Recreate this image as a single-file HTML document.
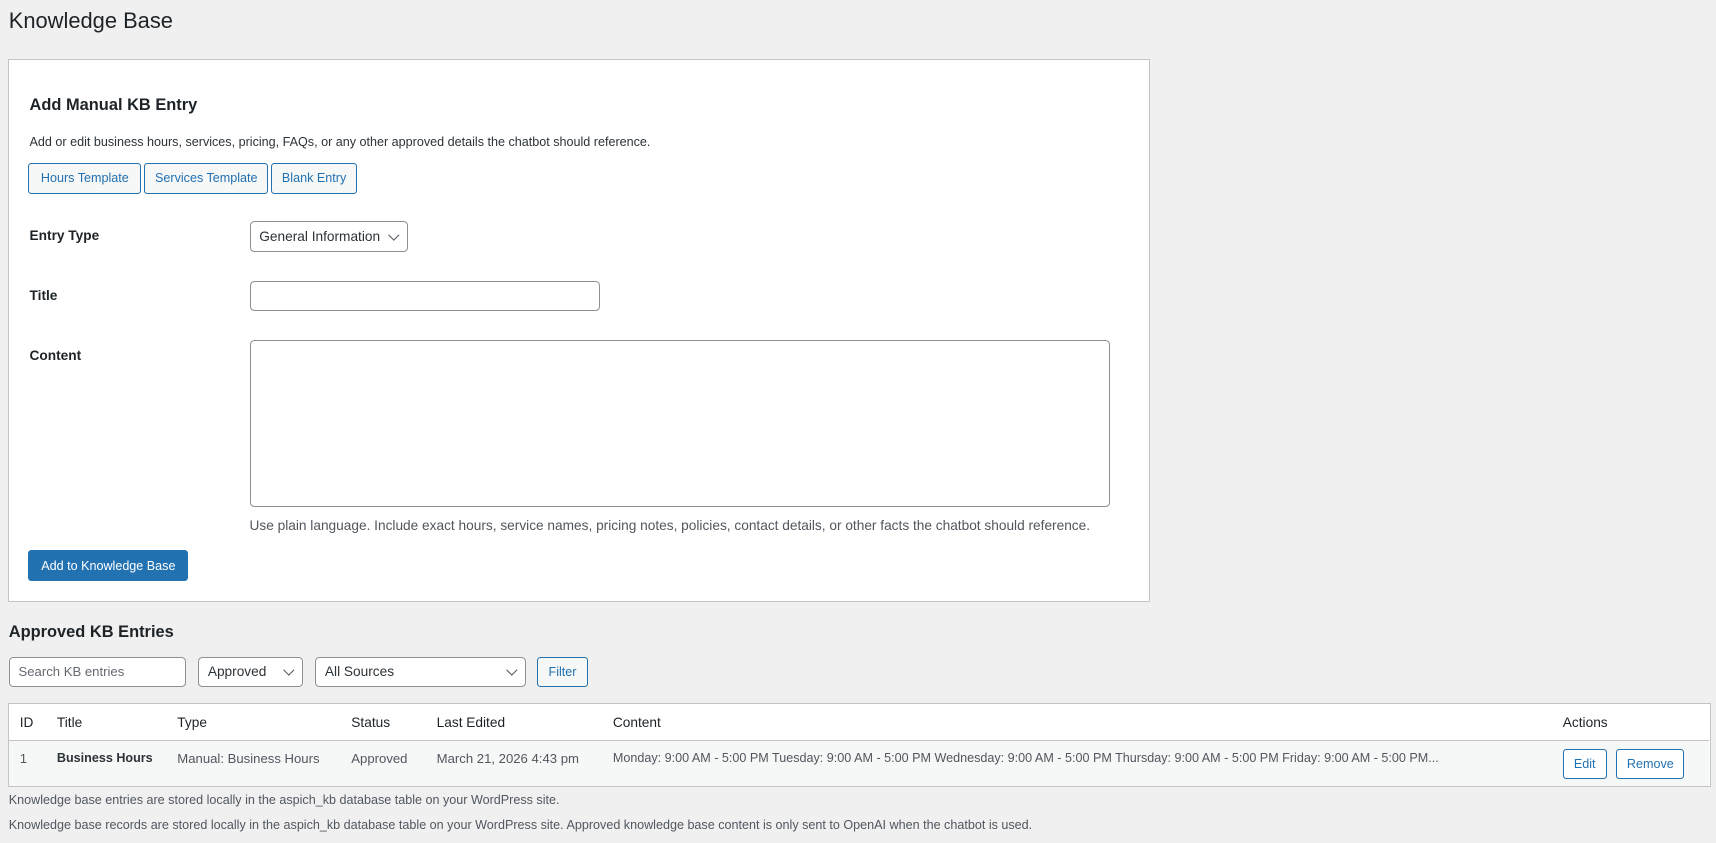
<!DOCTYPE html>
<html><head><meta charset="utf-8"><style>
html{zoom:1.0944}
body{margin:0;background:#f0f0f1;font-family:"Liberation Sans",sans-serif;color:#1d2327;font-size:12px;width:1568px;height:770px;position:relative;overflow:hidden}
.a{position:absolute;white-space:nowrap}
.box{position:absolute;box-sizing:border-box}
.btn{position:absolute;box-sizing:border-box;border:1px solid #2271b1;color:#2271b1;background:#f6f7f7;border-radius:3px;font-size:11.5px;display:flex;align-items:center;justify-content:center}
.inp{position:absolute;box-sizing:border-box;border:1px solid #8c8f94;background:#fff;border-radius:4px;font-size:12.5px;display:flex;align-items:center;padding-left:8px;color:#2c3338}
.chev{position:absolute;right:9px;top:8px;width:6px;height:6px;border-right:1.5px solid #50575e;border-bottom:1.5px solid #50575e;transform:rotate(45deg)}
</style></head><body>
<div class="a" style="left:8px;top:7px;font-size:20px;color:#1d2327">Knowledge Base</div>
<div class="box" style="left:7px;top:54px;width:1044px;height:496px;background:#fff;border:1px solid #c3c4c7"></div>
<div class="a" style="left:27px;top:88px;font-size:15px;font-weight:bold">Add Manual KB Entry</div>
<div class="a" style="left:27px;top:123px;font-size:11.5px;color:#2c3338">Add or edit business hours, services, pricing, FAQs, or any other approved details the chatbot should reference.</div>
<div class="btn" style="left:26px;top:149px;width:103px;height:28px">Hours Template</div>
<div class="btn" style="left:132px;top:149px;width:113px;height:28px">Services Template</div>
<div class="btn" style="left:248px;top:149px;width:78px;height:28px">Blank Entry</div>
<div class="a" style="left:27px;top:208px;font-size:12.5px;font-weight:bold">Entry Type</div>
<div class="inp" style="left:228px;top:202px;width:145px;height:28px">General Information<span class="chev"></span></div>
<div class="a" style="left:27px;top:263px;font-size:12.5px;font-weight:bold">Title</div>
<div class="inp" style="left:228px;top:257px;width:320px;height:27px"></div>
<div class="a" style="left:27px;top:318px;font-size:12.5px;font-weight:bold">Content</div>
<div class="inp" style="left:228px;top:311px;width:786px;height:152px"></div>
<div class="a" style="left:228px;top:473px;font-size:12.5px;color:#50575e">Use plain language. Include exact hours, service names, pricing notes, policies, contact details, or other facts the chatbot should reference.</div>
<div class="btn" style="left:26px;top:503px;width:146px;height:28px;background:#2271b1;color:#fff">Add to Knowledge Base</div>
<div class="a" style="left:8px;top:569px;font-size:15px;font-weight:bold">Approved KB Entries</div>
<div class="inp" style="left:8px;top:600px;width:162px;height:28px;color:#646970;font-size:12px">Search KB entries</div>
<div class="inp" style="left:181px;top:600px;width:96px;height:28px">Approved<span class="chev"></span></div>
<div class="inp" style="left:288px;top:600px;width:193px;height:28px">All Sources<span class="chev"></span></div>
<div class="btn" style="left:491px;top:600px;width:46px;height:28px">Filter</div>
<div class="box" style="left:7px;top:642px;width:1556px;height:77px;background:#fff;border:1px solid #c3c4c7"></div>
<div class="box" style="left:8px;top:676px;width:1554px;height:42px;background:#f6f7f7;border-top:1px solid #c3c4c7"></div>
<div class="a" style="left:18px;top:653px;font-size:12.5px">ID</div>
<div class="a" style="left:52px;top:653px;font-size:12.5px">Title</div>
<div class="a" style="left:162px;top:653px;font-size:12.5px">Type</div>
<div class="a" style="left:321px;top:653px;font-size:12.5px">Status</div>
<div class="a" style="left:399px;top:653px;font-size:12.5px">Last Edited</div>
<div class="a" style="left:560px;top:653px;font-size:12.5px">Content</div>
<div class="a" style="left:1428px;top:653px;font-size:12.5px">Actions</div>
<div class="a" style="left:18px;top:686px;color:#50575e">1</div>
<div class="a" style="left:52px;top:686px;font-weight:bold;color:#2c3338;font-size:11.5px">Business Hours</div>
<div class="a" style="left:162px;top:686px;color:#50575e">Manual: Business Hours</div>
<div class="a" style="left:321px;top:686px;color:#50575e">Approved</div>
<div class="a" style="left:399px;top:686px;color:#50575e">March 21, 2026 4:43 pm</div>
<div class="a" style="left:560px;top:686px;color:#50575e;width:762px;overflow:hidden;font-size:11.5px">Monday: 9:00 AM - 5:00 PM Tuesday: 9:00 AM - 5:00 PM Wednesday: 9:00 AM - 5:00 PM Thursday: 9:00 AM - 5:00 PM Friday: 9:00 AM - 5:00 PM...</div>
<div class="btn" style="left:1428px;top:684px;width:40px;height:28px;background:#fff">Edit</div>
<div class="btn" style="left:1477px;top:684px;width:62px;height:28px;background:#fff">Remove</div>
<div class="a" style="left:8px;top:725px;font-size:11.5px;color:#50575e">Knowledge base entries are stored locally in the aspich_kb database table on your WordPress site.</div>
<div class="a" style="left:8px;top:747px;font-size:11.5px;color:#50575e">Knowledge base records are stored locally in the aspich_kb database table on your WordPress site. Approved knowledge base content is only sent to OpenAI when the chatbot is used.</div>
</body></html>
